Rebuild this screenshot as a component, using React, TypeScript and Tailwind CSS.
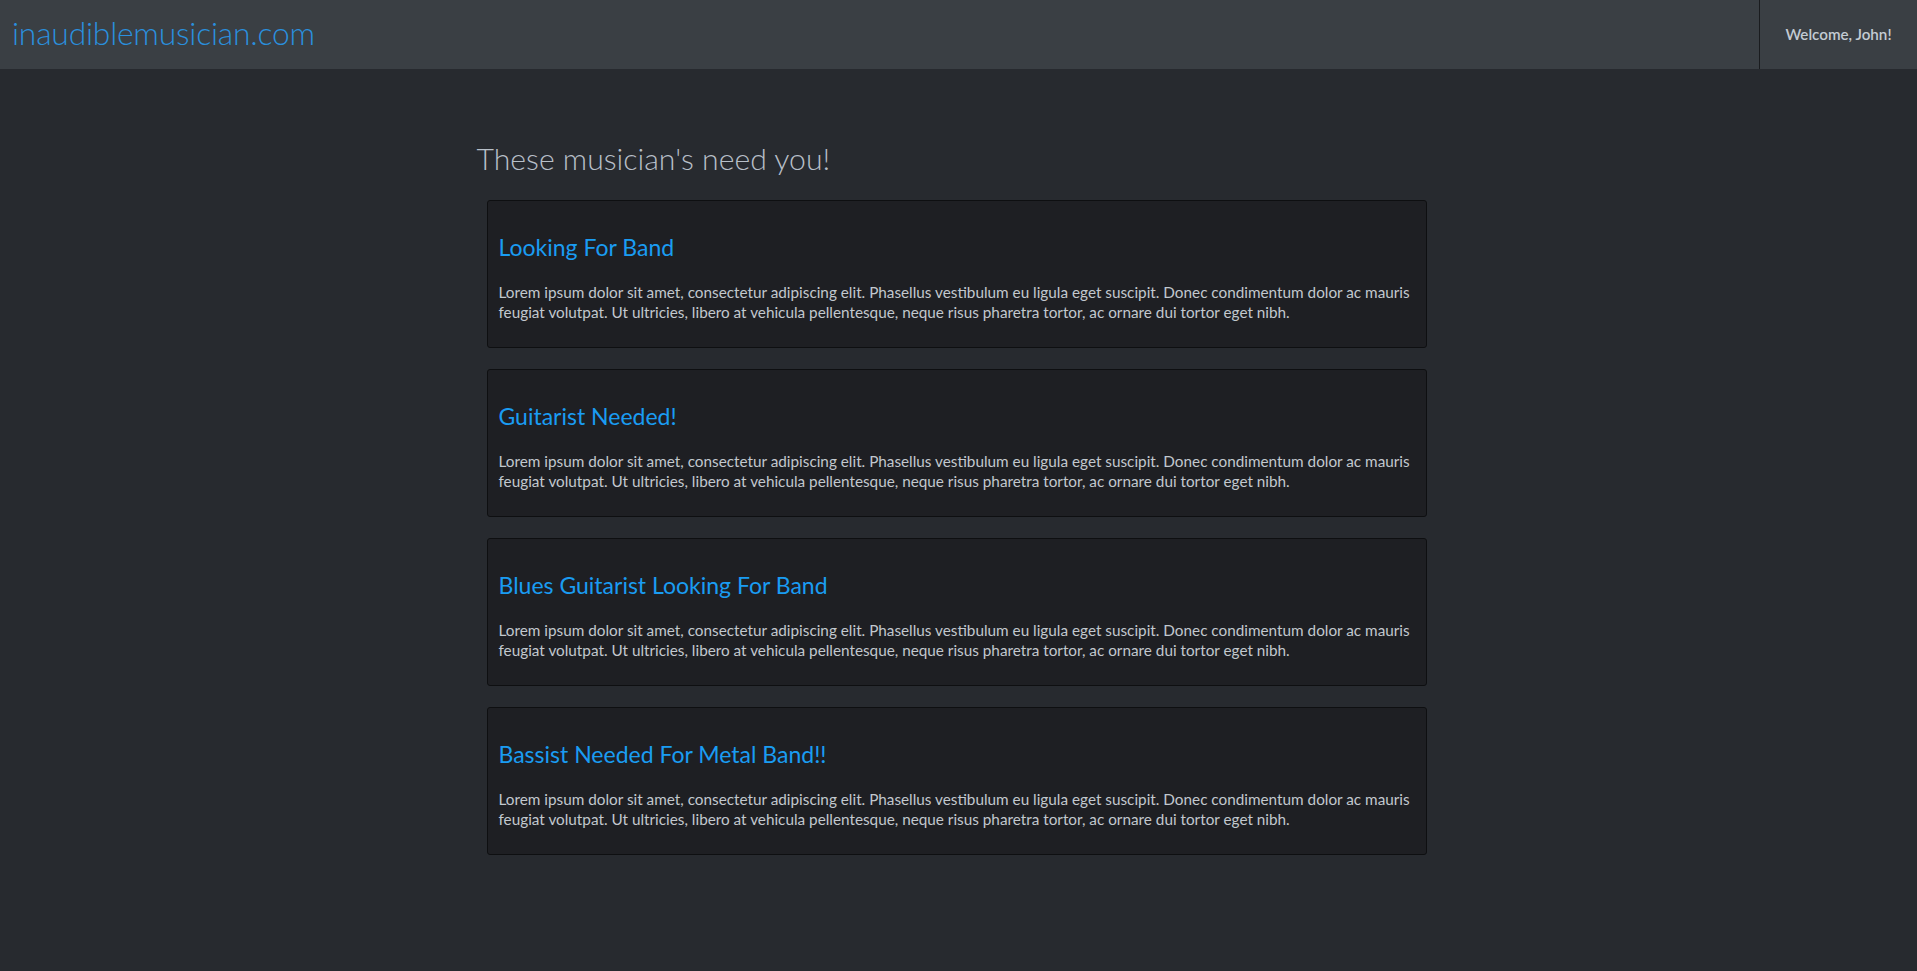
const posts = [
  'Looking For Band',
  'Guitarist Needed!',
  'Blues Guitarist Looking For Band',
  'Bassist Needed For Metal Band!!',
];

const lorem =
  'Lorem ipsum dolor sit amet, consectetur adipiscing elit. Phasellus vestibulum eu ligula eget suscipit. Donec condimentum dolor ac mauris feugiat volutpat. Ut ultricies, libero at vehicula pellentesque, neque risus pharetra tortor, ac ornare dui tortor eget nibh.';

export default function App() {
  return (
    <div className="min-h-screen bg-[#272a2f] font-['Lato',sans-serif]">
      {/* navbar */}
      <header className="h-[69px] bg-[#3a3f44] flex items-stretch justify-between">
        <a href="#" className="pl-[12px] pb-[2px] flex items-center text-[31.8px] font-light text-[#2a90de] tracking-[-0.2px]">
          inaudiblemusician.com
        </a>
        <div className="w-[158px] border-l border-[#1a1c1f] flex items-center justify-center text-[15.2px] font-semibold text-[#c3cbd3]">
          Welcome, John!
        </div>
      </header>

      <main className="w-[944px] pr-[4px] mx-auto pt-[71px] pb-[100px]">
        <h1 className="-ml-[10px] text-[30.2px] leading-[36px] font-light text-[#b7bfc8] mb-[24px]">
          These musician's need you!
        </h1>

        <div className="flex flex-col gap-[21px]">
          {posts.map((title) => (
            <div
              key={title}
              className="h-[148px] bg-[#1e1f23] border border-[#0e0f11] rounded-[3px] px-[11px] pt-[32px]"
            >
              <h3 className="text-[23px] leading-[28px] text-[#1a9cf2]">{title}</h3>
              <p className="mt-[21px] text-[15.3px] leading-[20px] text-[#c2c8ce]">{lorem}</p>
            </div>
          ))}
        </div>
      </main>
    </div>
  );
}
